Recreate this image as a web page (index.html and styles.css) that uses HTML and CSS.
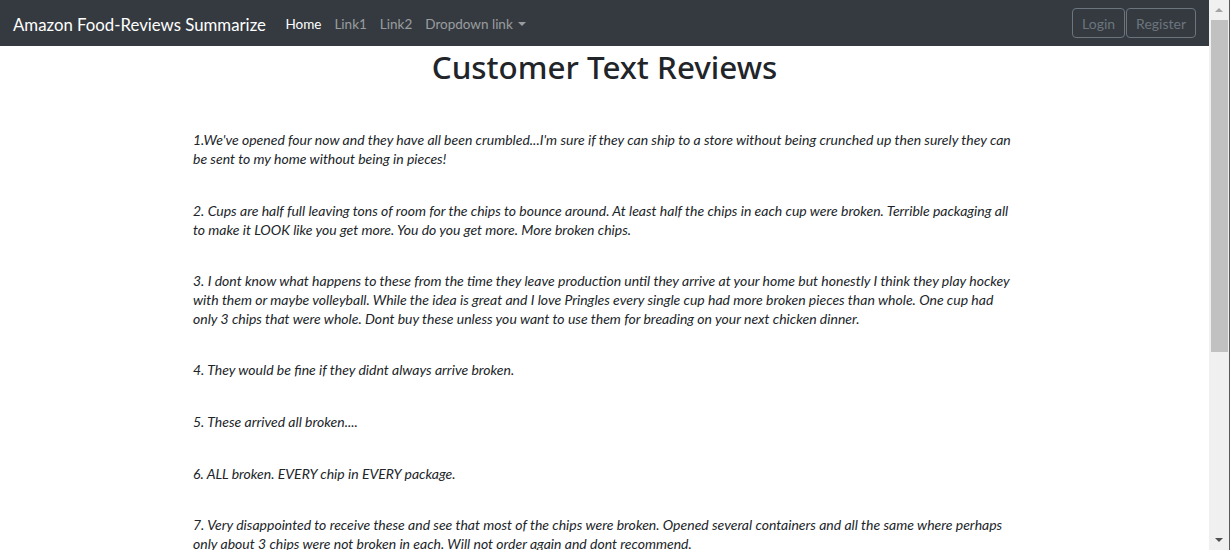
FILE: index.html
```html
<!DOCTYPE html>
<html lang="en">
<head>
<meta charset="utf-8">
<title>Amazon Food-Reviews Summarize</title>
<link rel="stylesheet" href="styles.css">
</head>
<body>
<div class="window">
  <div class="page">
    <nav class="navbar">
      <a class="brand" href="#">Amazon Food-Reviews Summarize</a>
      <ul class="nav">
        <li><a class="nav-link active" href="#">Home</a></li>
        <li><a class="nav-link" href="#">Link1</a></li>
        <li><a class="nav-link" href="#">Link2</a></li>
        <li><a class="nav-link dropdown" href="#">Dropdown link</a></li>
      </ul>
      <div class="auth">
        <button class="btn">Login</button>
        <button class="btn">Register</button>
      </div>
    </nav>
    <main class="content">
      <h1 class="title">Customer Text Reviews</h1>
      <div class="reviews">
        <p>1.We've opened four now and they have all been crumbled...I'm sure if they can ship to a store without being crunched up then surely they can be sent to my home without being in pieces!</p>
        <p>2. Cups are half full leaving tons of room for the chips to bounce around. At least half the chips in each cup were broken. Terrible packaging all to make it LOOK like you get more. You do you get more. More broken chips.</p>
        <p>3. I dont know what happens to these from the time they leave production until they arrive at your home but honestly I think they play hockey with them or maybe volleyball. While the idea is great and I love Pringles every single cup had more broken pieces than whole. One cup had only 3 chips that were whole. Dont buy these unless you want to use them for breading on your next chicken dinner.</p>
        <p>4. They would be fine if they didnt always arrive broken.</p>
        <p>5. These arrived all broken....</p>
        <p>6. ALL broken. EVERY chip in EVERY package.</p>
        <p>7. Very disappointed to receive these and see that most of the chips were broken. Opened several containers and all the same where perhaps only about 3 chips were not broken in each. Will not order again and dont recommend.</p>
      </div>
    </main>
  </div>
  <div class="scrollbar">
    <div class="arrow up"></div>
    <div class="track"><div class="thumb"></div></div>
    <div class="arrow down"></div>
  </div>
</div>
</body>
</html>
```
FILE: styles.css
```css
html, body {
  margin: 0;
  padding: 0;
  height: 550px;
  overflow: hidden;
  background: #fff;
}
body {
  font-family: Lato, "Open Sans", sans-serif;
  color: #212529;
}
.window {
  display: flex;
  height: 550px;
}
.page {
  flex: 1;
  min-width: 0;
}
.navbar {
  display: flex;
  align-items: center;
  height: 46px;
  box-sizing: border-box;
  padding: 8px 13px;
  background: #343a40;
}
.brand {
  color: #fff;
  text-decoration: none;
  font-size: 16.8px;
  line-height: 26px;
  padding-top: 4px;
  margin-right: 13px;
  white-space: nowrap;
}
.nav {
  display: flex;
  list-style: none;
  margin: 0;
  padding: 0;
  flex: 1;
}
.nav-link {
  display: block;
  padding: 2px 6.5px 0;
  font-size: 13.5px;
  line-height: 28px;
  color: rgba(255, 255, 255, 0.5);
  text-decoration: none;
}
.nav-link.active {
  color: #fff;
}
.dropdown::after {
  content: "";
  display: inline-block;
  margin-left: 5px;
  vertical-align: 3px;
  border-top: 4px solid rgba(255, 255, 255, 0.5);
  border-left: 4px solid transparent;
  border-right: 4px solid transparent;
}
.auth {
  display: flex;
  gap: 1px;
}
.btn {
  font-family: Lato, "Open Sans", sans-serif;
  font-size: 14px;
  line-height: 20px;
  height: 30px;
  padding: 5px 9px 3px;
  box-sizing: border-box;
  background: transparent;
  color: #6c757d;
  border: 1px solid #6c757d;
  border-radius: 4px;
}
.content {
  padding: 0;
}
.title {
  margin: 2px 0 0;
  text-align: center;
  font-family: "Noto Sans", "Open Sans", sans-serif;
  font-size: 31.4px;
  font-weight: 500;
  line-height: 38.4px;
  color: #212529;
}
.reviews {
  width: 823px;
  margin: 45px auto 0;
}
.reviews p {
  margin: 0 0 33px;
  font-size: 14px;
  line-height: 18.7px;
  font-style: italic;
}
.scrollbar {
  width: 20px;
  border-right: 1px solid #5a5a5a;
  background: #f0f0f0;
  display: flex;
  flex-direction: column;
  align-items: center;
}
.arrow {
  height: 20px;
  width: 17px;
  display: flex;
  justify-content: center;
  align-items: center;
}
.arrow.up::before {
  content: "";
  border-bottom: 4px solid #a3a3a3;
  border-left: 4px solid transparent;
  border-right: 4px solid transparent;
}
.arrow.down::before {
  content: "";
  border-top: 4px solid #505050;
  border-left: 4px solid transparent;
  border-right: 4px solid transparent;
}
.track {
  flex: 1;
  width: 100%;
  display: flex;
  justify-content: center;
  padding-left: 1px;
  box-sizing: border-box;
}
.thumb {
  width: 17px;
  height: 332px;
  background: #c1c1c1;
}
```
